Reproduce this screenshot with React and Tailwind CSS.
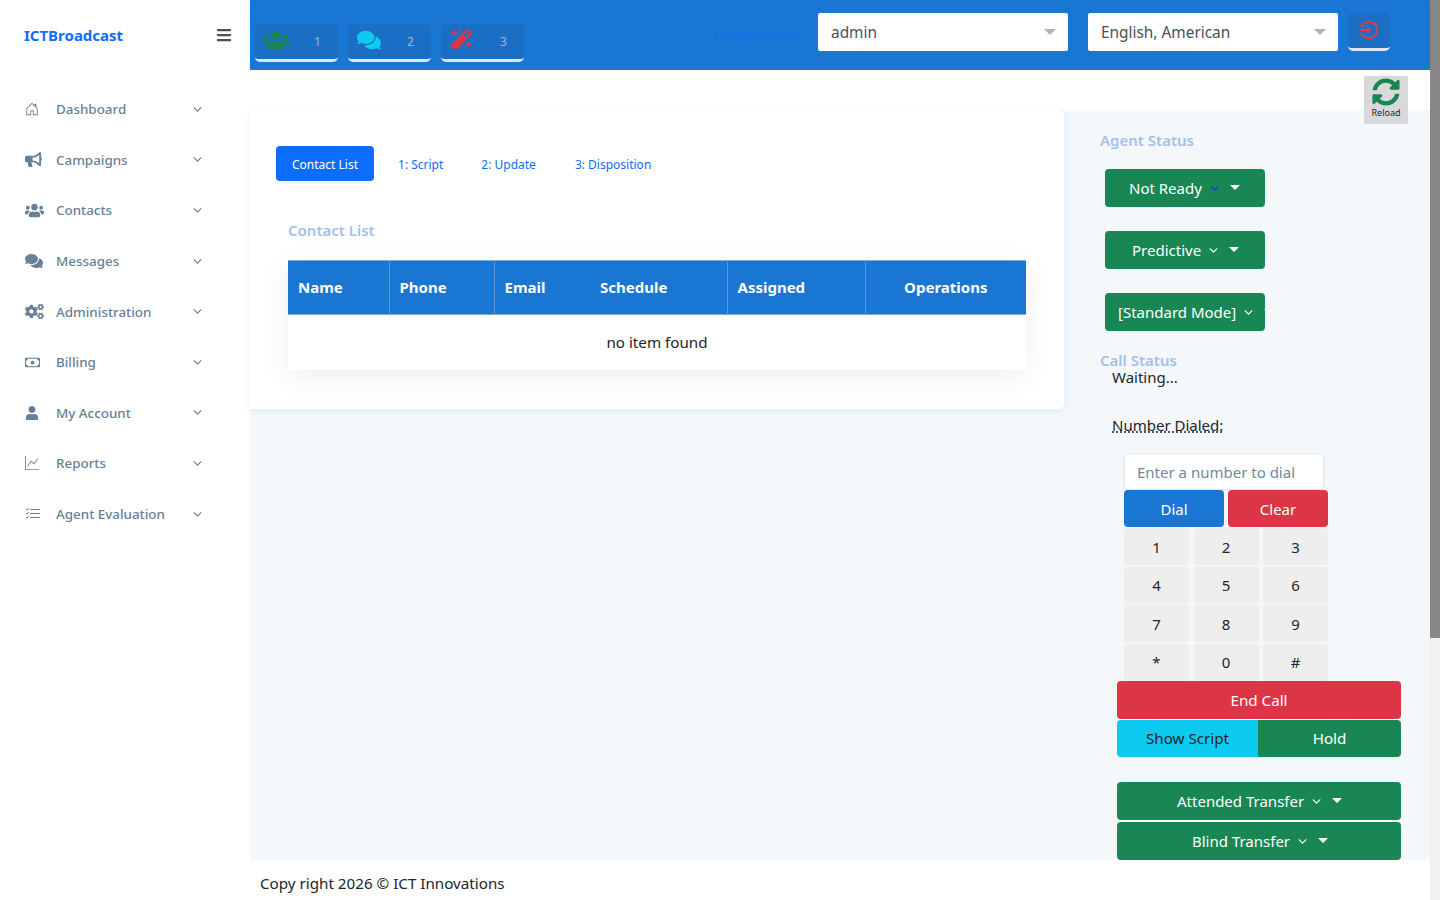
import React from 'react'
import { BsHouseDoor, BsCash, BsGraphUp, BsListCheck, BsChevronDown } from 'react-icons/bs'
import { FaBullhorn, FaUsers, FaComments, FaCogs, FaUser, FaBars, FaMagic, FaSyncAlt } from 'react-icons/fa'
import { RiLoginCircleLine } from 'react-icons/ri'

const menu = [
  { label: 'Dashboard', icon: BsHouseDoor, size: 14 },
  { label: 'Campaigns', icon: FaBullhorn, size: 17 },
  { label: 'Contacts', icon: FaUsers, size: 19 },
  { label: 'Messages', icon: FaComments, size: 18 },
  { label: 'Administration', icon: FaCogs, size: 19 },
  { label: 'Billing', icon: BsCash, size: 15 },
  { label: 'My Account', icon: FaUser, size: 14 },
  { label: 'Reports', icon: BsGraphUp, size: 14 },
  { label: 'Agent Evaluation', icon: BsListCheck, size: 16 },
]

const keys = ['1', '2', '3', '4', '5', '6', '7', '8', '9', '*', '0', '#']

function Sidebar() {
  return (
    <aside className="w-[250px] shrink-0 bg-white">
      <div className="flex justify-between pl-6 pr-[18px] pt-[24px] h-[84px] items-start">
        <span className="text-[15px] font-bold text-[#0d6efd] leading-[22px]">ICTBroadcast</span>
        <FaBars size={16} className="text-[#495057] mt-[3px]" />
      </div>
      <nav>
        {menu.map(({ label, icon: Icon, size }) => (
          <a key={label} href="#" className="flex items-center h-[50.6px] pl-[25px] text-[13.4px] font-medium text-[#678098]">
            <span className="w-[31px] shrink-0">
              <Icon size={size} />
            </span>
            <span className="flex-1">{label}</span>
            <BsChevronDown size={9} className="mr-[48px] text-[#5d7388]" strokeWidth={1} />
          </a>
        ))}
      </nav>
    </aside>
  )
}

function ToolGroup({ icon, num }) {
  return (
    <div className="flex w-[83px] h-[38px] rounded-[5px] bg-[#1a6fc4] border-b-[3px] border-[#dbe7f6]">
      <div className="w-[42px] flex items-center justify-center pb-1 border-r border-dotted border-[#1764b2]">{icon}</div>
      <div className="flex-1 flex items-center justify-center text-[12px] text-[#a9b4c0] pt-[1px]">{num}</div>
    </div>
  )
}

function HeaderSelect({ value }) {
  return (
    <div className="relative w-[250px] h-[38px] bg-white rounded-[2px] flex items-center pl-[13px] pt-[2px] text-[15.4px] text-[#495057]">
      {value}
      <span className="absolute right-[12px] top-[16px] border-x-[6px] border-t-[6px] border-x-transparent border-t-[#adb5bd]" />
    </div>
  )
}

function Header() {
  return (
    <header className="h-[70px] shrink-0 bg-[#1976d2] flex items-start pt-[13px] pl-[5px] shadow-[0_2px_5px_rgba(0,0,0,0.06)]">
      <div className="flex gap-[10px] mt-[11px]">
        <ToolGroup num="1" icon={<FaUsers size={26} className="text-[#198754]" />} />
        <ToolGroup num="2" icon={<FaComments size={24} className="text-[#0dcaf0]" />} />
        <ToolGroup num="3" icon={<FaMagic size={21} className="text-[#dc3545]" />} />
      </div>
      <span className="ml-[189px] mr-[12px] mt-[10px] text-[15.4px] font-light text-[#0d6efd] w-[93px] whitespace-nowrap">Logged in as :</span>
      <HeaderSelect value="admin" />
      <div className="w-5" />
      <HeaderSelect value="English, American" />
      <button className="ml-[10px] w-[42px] h-[38px] rounded-[5px] bg-[#1a6fc4] border-b-[3px] border-[#dbe7f6] flex items-center justify-center pb-[2px]">
        <RiLoginCircleLine size={22} className="text-[#e8364a]" />
      </button>
    </header>
  )
}

function ContactCard() {
  return (
    <section className="w-[814px] h-[299px] shrink-0 bg-white rounded-r-[5px] shadow-[0_2px_6px_rgba(120,140,160,0.12)] pt-[36px] px-[26px]">
      <div className="flex items-center gap-[6px] text-[12px] text-[#0d6efd]">
        <a href="#" className="h-[35px] px-4 pt-[3px] flex items-center rounded-[4px] bg-[#0d6efd] text-white">Contact List</a>
        <a href="#" className="h-[35px] ml-[2px] px-4 pt-[3px] flex items-center">1: Script</a>
        <a href="#" className="h-[35px] px-4 pt-[3px] flex items-center">2: Update</a>
        <a href="#" className="h-[35px] ml-[1px] px-4 pt-[3px] flex items-center">3: Disposition</a>
      </div>
      <div className="ml-3 w-[738px]">
        <h3 className="mt-[38px] text-[15px] font-semibold text-[#a6bfe8] leading-[22px]">Contact List</h3>
        <table className="mt-[19px] w-full table-fixed border-collapse bg-white shadow-[0_6px_24px_rgba(80,90,100,0.1)] rounded-b-[3px]">
          <thead>
            <tr className="h-[54px] bg-[#1976d2] text-white text-[15px] text-left border-y border-[#7fabe0]">
              <th className="w-[101px] pl-[10px] font-bold border-r border-[#5b97da]">Name</th>
              <th className="w-[105px] pl-[10px] font-bold border-r border-[#5b97da]">Phone</th>
              <th className="w-[95px] pl-[10px] font-bold">Email</th>
              <th className="w-[138px] pl-[11px] font-bold border-r border-[#5b97da]">Schedule</th>
              <th className="w-[138px] pl-[10px] font-bold border-r border-[#5b97da]">Assigned</th>
              <th className="font-bold text-center">Operations</th>
            </tr>
          </thead>
          <tbody>
            <tr className="h-[55px]">
              <td colSpan={6} className="text-center text-[15.2px] text-[#212529]">no item found</td>
            </tr>
          </tbody>
        </table>
      </div>
    </section>
  )
}

function DropButton({ label, pad, chevron = 'text-white', wide }) {
  return (
    <button className={`flex items-center ${wide ? 'w-[284px]' : 'w-[160px]'} h-[38px] ${pad} pt-[1px] rounded-[4px] bg-[#198754] text-white text-[15px] whitespace-nowrap`}>
      {label}
      <BsChevronDown size={9} strokeWidth={1.2} className={`ml-[8px] shrink-0 ${chevron}`} />
      <span className="ml-[11px] mb-[2px] shrink-0 border-x-[5px] border-t-[5px] border-x-transparent border-t-white" />
    </button>
  )
}

function AgentPanel() {
  return (
    <aside className="w-[366px] shrink-0 relative">
      <h3 className="absolute left-[36px] top-[19px] text-[15px] font-semibold leading-[22px] text-[#a6bfe8]">Agent Status</h3>
      <div className="pl-[41px] pt-[59px] flex flex-col gap-6">
        <DropButton label="Not Ready" pad="pl-[24px]" chevron="text-[#0d3fe0]" />
        <DropButton label="Predictive" pad="pl-[27px]" />
        <DropButton label="[Standard Mode]" pad="pl-[13px]" />
      </div>
      <h3 className="ml-[36px] mt-[18px] text-[15px] font-semibold leading-[22px] text-[#a6bfe8]">Call Status</h3>
      <div className="ml-[48px] -mt-[5px] text-[15px] leading-[22px] text-[#212529]">Waiting...</div>
      <abbr title="Number Dialed" className="block w-fit ml-[48px] mt-[26px] text-[15px] leading-[22px] text-[#212529] underline decoration-dotted">Number Dialed:</abbr>
      <div className="ml-[60px] mt-[17px]">
        <input placeholder="Enter a number to dial" className="block w-[200px] h-[37px] px-3 rounded-[3px] bg-white border border-[#e3e8ec] text-[15px] placeholder:text-[#6c8aa0]" />
        <div className="flex gap-1">
          <button className="w-[100px] h-[37px] pt-[1px] rounded-[4px] bg-[#1976d2] text-white text-[15px]">Dial</button>
          <button className="w-[100px] h-[37px] pt-[1px] rounded-[4px] bg-[#dc3545] text-white text-[15px]">Clear</button>
        </div>
        <div className="mt-[1px] grid grid-cols-[65px_65px_65px] gap-x-[4.5px] gap-y-[1.5px]">
          {keys.map((k) => (
            <button key={k} className="h-[37px] pt-[1px] rounded-[3px] bg-[#eeeeee] text-[15px] text-[#212529]">{k}</button>
          ))}
        </div>
      </div>
      <div className="ml-[53px] w-[284px]">
        <button className="w-full h-[38px] pt-[1px] rounded-[4px] bg-[#dc3545] text-white text-[15.2px]">End Call</button>
        <div className="flex h-[37px] mt-[1px]">
          <button className="w-[141px] pt-[1px] rounded-l-[4px] bg-[#0dcaf0] text-[#212529] text-[15.2px]">Show Script</button>
          <button className="flex-1 pt-[1px] rounded-r-[4px] bg-[#198754] text-white text-[15.2px]">Hold</button>
        </div>
        <div className="mt-[25px] flex flex-col gap-[2px]">
          <DropButton wide label="Attended Transfer" pad="pl-[60px]" />
          <DropButton wide label="Blind Transfer" pad="pl-[75px]" />
        </div>
      </div>
    </aside>
  )
}

export default function App() {
  return (
    <div className="h-screen overflow-hidden flex font-['Noto_Sans',sans-serif]">
      <Sidebar />
      <div className="flex-1 min-w-0 flex flex-col bg-[#f4f8fb] relative">
        <Header />
        <div className="h-[40px] bg-white shrink-0" />
        <div className="absolute right-[22px] top-[76px] w-[44px] h-[48px] rounded-[2px] bg-[#d5d5d8]/90 flex flex-col items-center pt-[2px] z-10">
          <FaSyncAlt size={28} className="text-[#198754]" />
          <span className="text-[9px] leading-[12px] text-[#212529] mt-[1px]">Reload</span>
        </div>
        <div className="flex flex-1 min-h-0 items-start">
          <ContactCard />
          <AgentPanel />
        </div>
        <footer className="h-[40px] bg-white flex items-center pl-[10px] pt-[7px] text-[15.2px] text-[#212529] shrink-0">Copy right 2026 © ICT Innovations</footer>
      </div>
      {/* scrollbar strip, headless chrome hides the real one */}
      <div className="w-[10px] shrink-0 bg-[#f1f1f1]">
        <div className="h-[638px] bg-[#888888]" />
      </div>
    </div>
  )
}
